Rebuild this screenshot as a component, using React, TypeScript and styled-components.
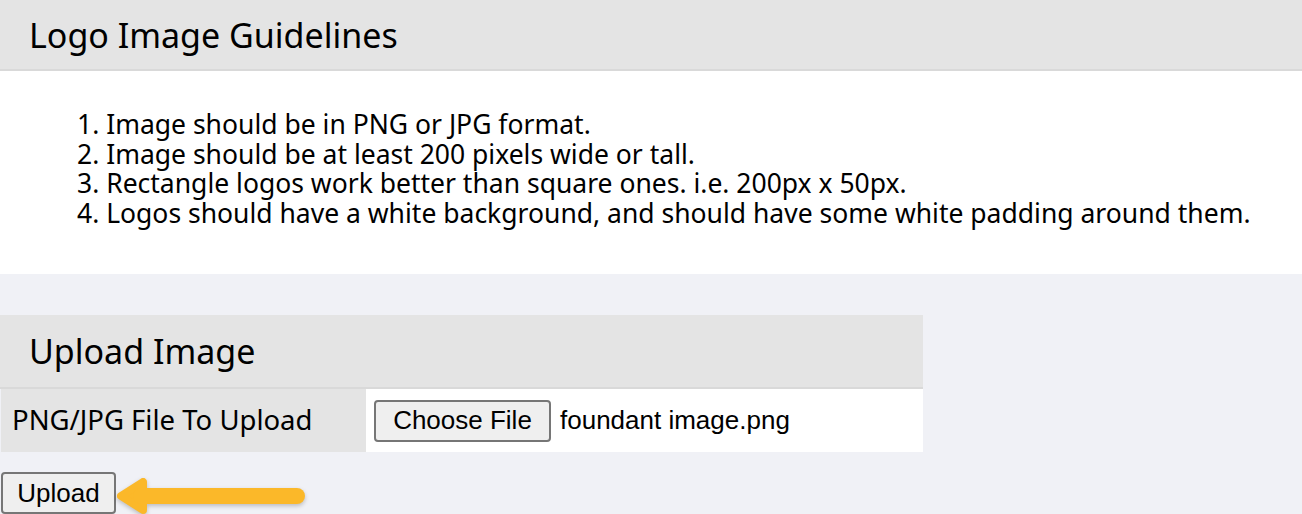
import styled, { createGlobalStyle } from "styled-components";

// Page defaults: no body margin, soft grey-blue page background
const GlobalStyle = createGlobalStyle`
  html, body {
    margin: 0;
    padding: 0;
    background-color: #f0f1f6;
    overflow: hidden;
  }
  body {
    font-family: "Noto Sans", "Open Sans", sans-serif;
    color: #000;
  }
`;

const Page = styled.div`
  display: flex;
  flex-direction: column;
  width: 1302px;
  & > * {
    flex-shrink: 0;
  }
`;

// Grey title band used by both panels
const PanelHeader = styled.div<{ $height: number }>`
  height: ${(p) => p.$height}px;
  display: flex;
  align-items: center;
  padding-left: 29px;
  background-color: #e4e4e4;
  border-bottom: 2px solid #d9d9d9;
  box-sizing: border-box;
`;

const PanelTitle = styled.h2`
  margin: 0;
  font-size: 34px;
  font-weight: 400;
`;

const GuideBody = styled.div`
  background-color: #fff;
  height: 203px;
  box-sizing: border-box;
  padding-top: 39px;
`;

const GuideList = styled.ol`
  margin: 0;
  padding-left: 77px;
  list-style-position: inside;
  font-size: 26.5px;
  line-height: 29.5px;
`;

const UploadCard = styled.div`
  width: 923px;
  margin-top: 41px;
`;

const Row = styled.div`
  display: flex;
  height: 63px;
`;

const LabelCell = styled.div`
  width: 365px;
  margin-left: 1px;
  display: flex;
  align-items: center;
  padding: 0 0 3px 11px;
  box-sizing: border-box;
  background-color: #e4e4e4;
  font-size: 27.5px;
`;

const ValueCell = styled.div`
  flex: 1;
  display: flex;
  align-items: center;
  gap: 9px;
  padding-left: 8px;
  background-color: #fff;
  font-family: "Liberation Sans", Arial, sans-serif;
  font-size: 26px;
`;

// Native-looking grey button (Chrome default look)
const PlainButton = styled.button<{ $width: number }>`
  width: ${(p) => p.$width}px;
  height: 42px;
  padding: 0;
  font-family: "Liberation Sans", Arial, sans-serif;
  font-size: 26px;
  color: #000;
  background-color: #efefef;
  border: 2px solid #767676;
  border-radius: 4px;
  box-sizing: border-box;
`;

const FileName = styled.span`
  color: #000;
`;

const ActionRow = styled.div`
  display: flex;
  align-items: flex-start;
  margin-top: 20px;
  padding-left: 1px;
`;

const Arrow = styled.svg`
  display: block;
  margin-left: 1px;
  filter: drop-shadow(0 2px 2px rgba(0, 0, 0, 0.22));
`;

const guidelines = [
  "Image should be in PNG or JPG format.",
  "Image should be at least 200 pixels wide or tall.",
  "Rectangle logos work better than square ones. i.e. 200px x 50px.",
  "Logos should have a white background, and should have some white padding around them.",
];

export default function App() {
  return (
    <>
      <GlobalStyle />
      <Page>
        <PanelHeader $height={71}>
          <PanelTitle>Logo Image Guidelines</PanelTitle>
        </PanelHeader>
        <GuideBody>
          <GuideList>
            {guidelines.map((g) => (
              <li key={g}>{g}</li>
            ))}
          </GuideList>
        </GuideBody>

        <UploadCard>
          <PanelHeader $height={74}>
            <PanelTitle>Upload Image</PanelTitle>
          </PanelHeader>
          <Row>
            <LabelCell>PNG/JPG File To Upload</LabelCell>
            <ValueCell>
              <PlainButton $width={177}>Choose File</PlainButton>
              <FileName>foundant image.png</FileName>
            </ValueCell>
          </Row>
        </UploadCard>

        <ActionRow>
          <PlainButton $width={115}>Upload</PlainButton>
          <Arrow width="196" height="46" viewBox="0 0 196 46">
            <path
              d="M4 24 L26 10 L26 38 Z"
              fill="#fbb829"
              stroke="#fbb829"
              strokeWidth="8"
              strokeLinejoin="round"
            />
            <line
              x1="24"
              y1="24"
              x2="180"
              y2="24"
              stroke="#fbb829"
              strokeWidth="16"
              strokeLinecap="round"
            />
          </Arrow>
        </ActionRow>
      </Page>
    </>
  );
}
